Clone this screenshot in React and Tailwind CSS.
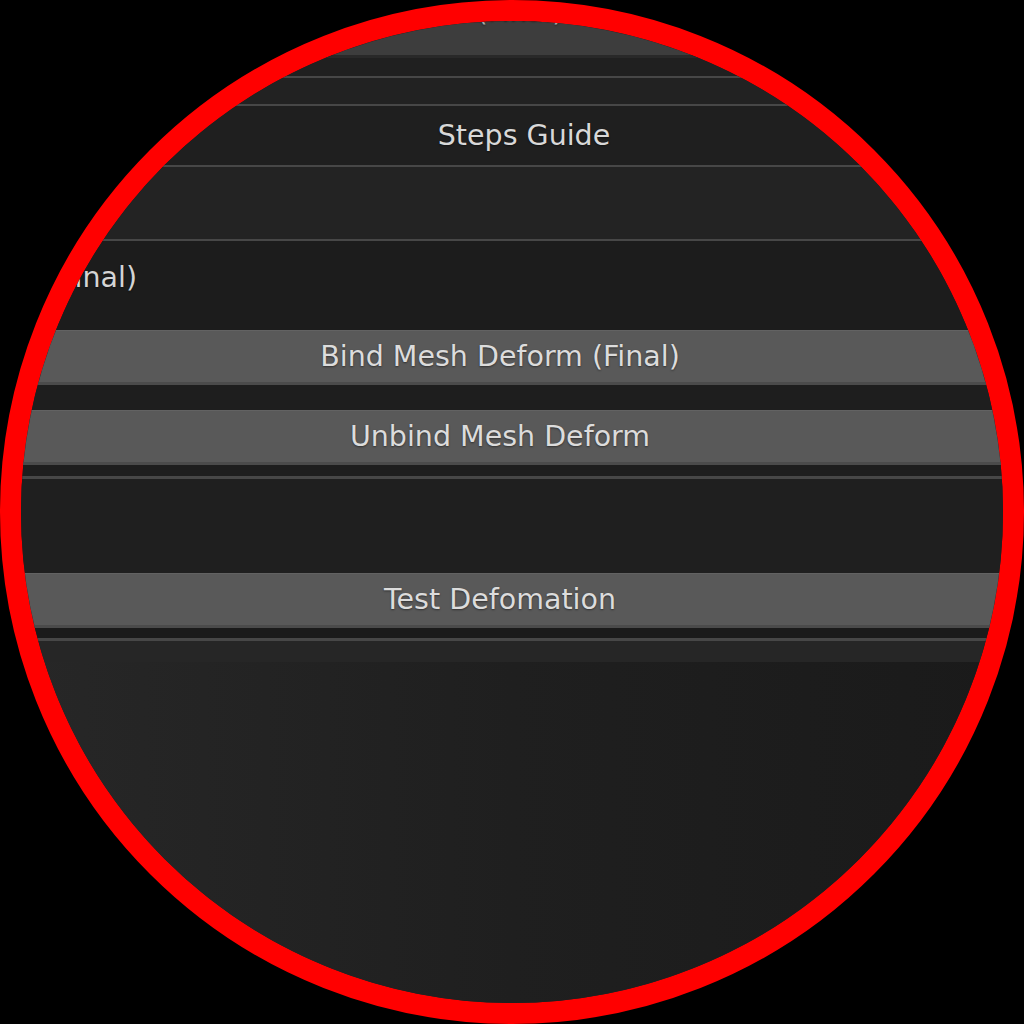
import React from "react";

const font = "font-['DejaVu_Sans','Liberation_Sans',sans-serif]";
const shadow = "[text-shadow:0_1px_2px_rgba(0,0,0,0.45)]";

const Line = ({ h = "h-[2px]" }) => <div className={`${h} w-full bg-[#474747] shrink-0`} />;

const Button = ({ label, tone = "bg-[#595959]", text = "text-[#dcdcdc]" }) => (
  <div
    className={`h-[55px] shrink-0 w-full ${tone} border-t border-[#626262] border-b-[3px] border-b-[#4b4b4b] flex items-center justify-center pr-[24px]`}
  >
    <span className={`text-[28.5px] leading-[28px] whitespace-nowrap ${text} ${shadow}`}>{label}</span>
  </div>
);

export default function App() {
  return (
    <div className={`w-[1024px] h-[1024px] bg-black ${font}`}>
      <div className="w-[1024px] h-[1024px] rounded-full border-[21px] border-[#ff0000] overflow-hidden bg-[#1f1f1f]">
        <div className="flex flex-col w-full -mt-[26px]">
          {/* partially visible button at the top */}
          <div className="h-[60px] shrink-0 w-full bg-[#3d3d3d] flex justify-center pt-[3px] pl-[16px]">
            <span className={`text-[28px] leading-[28px] text-[#a8a8a8] ${shadow}`}>(Final)</span>
          </div>
          <div className="h-[21px] shrink-0 bg-[#202020] border-t-[3px] border-[#292929]" />
          <Line />
          <div className="h-[26px] shrink-0 bg-[#222222]" />
          <Line />

          {/* Steps Guide */}
          <div className="h-[59px] shrink-0 bg-[#1f1f1f] flex items-center justify-center pl-[24px]">
            <span className={`text-[28.5px] leading-[28px] text-[#d8d8d8] ${shadow}`}>Steps Guide</span>
          </div>
          <Line />
          <div className="h-[72px] shrink-0 bg-[#232323]" />
          <Line />

          {/* label row */}
          <div className="h-[89px] shrink-0 bg-[#1c1c1c] pt-[23px]">
            <div className="w-[116px] flex justify-end">
              <span className={`text-[28.5px] leading-[28px] whitespace-nowrap text-[#d4d4d4] ${shadow}`}>
                Bind Mesh Deform (Final)
              </span>
            </div>
          </div>

          <Button label="Bind Mesh Deform (Final)" />
          <div className="h-[25px] shrink-0 bg-[#1e1e1e]" />
          <Button label="Unbind Mesh Deform" />
          <div className="h-[11px] shrink-0 bg-[#1e1e1e]" />
          <Line h="h-[3px]" />
          <div className="h-[94px] shrink-0 bg-[#1f1f1f]" />
          <Button label="Test Defomation" />
          <div className="h-[10px] shrink-0 bg-[#1b1b1b]" />
          <Line h="h-[3px]" />
          <div className="h-[21px] shrink-0 bg-[#262626]" />
          <div className="h-[400px] shrink-0 bg-linear-to-r from-[#272727] via-[#1f1f1f] to-[#1a1a1a]" />
        </div>
      </div>
    </div>
  );
}
